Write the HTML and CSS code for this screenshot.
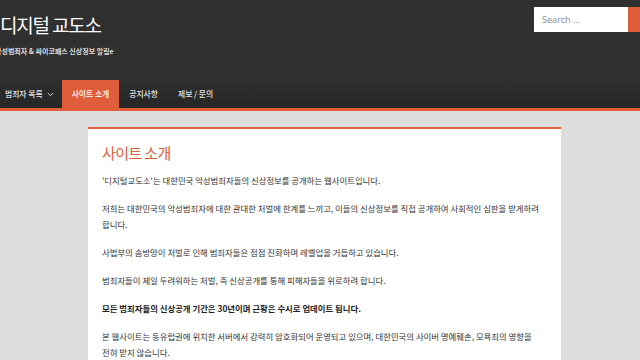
FILE: index.html
```html
<!DOCTYPE html>
<html>
<head>
<meta charset="UTF-8">
<title>디지털 교도소</title>
<link rel="stylesheet" href="styles.css">
</head>
<body>
<div class="header">
  <div class="branding">
    <div class="site_title">디지털 교도소</div>
    <div class="site_desc"><span class="cut">악</span>성범죄자 &amp; 싸이코패스 신상정보 알림e</div>
  </div>
  <form class="search_form">
    <input type="text" class="search_field" placeholder="Search ...">
    <div class="search_btn"></div>
  </form>
</div>
<div class="nav">
  <div class="nav_item">범죄자 목록
    <svg class="chevron" width="7" height="5" viewBox="0 0 7 5"><path d="M0.8 1 L3.5 3.7 L6.2 1" fill="none" stroke="#cfcfcf" stroke-width="1"/></svg>
  </div>
  <div class="nav_item active">사이트 소개</div>
  <div class="nav_item">공지사항</div>
  <div class="nav_item">제보 / 문의</div>
</div>
<div class="main">
  <div class="card">
    <h1 class="card_title">사이트 소개</h1>
    <p>'디지털교도소'는 대한민국 악성범죄자들의 신상정보를 공개하는 웹사이트입니다.</p>
    <p>저희는 대한민국의 악성범죄자에 대한 관대한 처벌에 한계를 느끼고, 이들의 신상정보를 직접 공개하여 사회적인 심판을 받게하려 합니다.</p>
    <p>사법부의 솜방망이 처벌로 인해 범죄자들은 점점 진화하며 레벨업을 거듭하고 있습니다.</p>
    <p>범죄자들이 제일 두려워하는 처벌, 즉 신상공개를 통해 피해자들을 위로하려 합니다.</p>
    <p><b>모든 범죄자들의 신상공개 기간은 30년이며 근황은 수시로 업데이트 됩니다.</b></p>
    <p>본 웹사이트는 동유럽권에 위치한 서버에서 강력히 암호화되어 운영되고 있으며, 대한민국의 사이버 명예훼손, 모욕죄의 영향을 전혀 받지 않습니다.</p>
  </div>
</div>
</body>
</html>
```

FILE: styles.css
```css
html, body {
  margin: 0px;
  height: 100%;
}
body {
  background: #dddddd;
  font-family: "Noto Sans CJK KR", "Open Sans", sans-serif;
  overflow: hidden;
}

.header {
  display: flex;
  justify-content: space-between;
  background: #303030;
  height: 80px;
}
.branding {
  padding-top: 13px;
}
.site_title {
  color: #ffffff;
  font-size: 19px;
  line-height: 24px;
  letter-spacing: -1.2px;
}
.site_desc {
  margin-top: 9px;
  margin-left: -5px;
  color: #dddddd;
  font-size: 7px;
  line-height: 10px;
  font-weight: bold;
}
.search_form {
  display: flex;
  margin-top: 7px;
  margin-right: -14px;
  height: 25px;
}
.search_field {
  box-sizing: border-box;
  width: 94px;
  height: 25px;
  border: none;
  padding: 0 8px;
  font: normal 9px "Open Sans", sans-serif;
  color: #666;
}
.search_field::placeholder {
  color: #8a8a8a;
}
.search_btn {
  width: 26px;
  background: #e05d3b;
}

.nav {
  display: flex;
  height: 28px;
  background: linear-gradient(#2f2f2f, #262626);
  border-bottom: 3px solid #e05d3b;
}
.nav_item {
  display: flex;
  align-items: center;
  gap: 4px;
  padding: 0 10px;
  color: #e2e2e2;
  font-size: 7.8px;
  font-weight: 500;
  line-height: 28px;
}
.nav_item:first-child {
  padding-left: 5px;
  padding-right: 8px;
}
.nav_item.active {
  background: #e05d3b;
  color: #ffffff;
}
.chevron {
  display: block;
}

.main {
  padding-top: 16px;
  padding-left: 88px;
}
.card {
  width: 445px;
  background: #ffffff;
  border-top: 2px solid #e05d3b;
  padding: 0 14px 20px 14px;
  word-break: keep-all;
}
.card_title {
  margin: 14px 0 9px 0;
  font-size: 15px;
  line-height: 20px;
  font-weight: normal;
  color: #e05d3b;
  letter-spacing: -0.6px;
}
.card p {
  margin: 0 0 12px 0;
  font-size: 8.4px;
  line-height: 16px;
  color: #333333;
}
.card b {
  color: #1e1e1e;
}
```
